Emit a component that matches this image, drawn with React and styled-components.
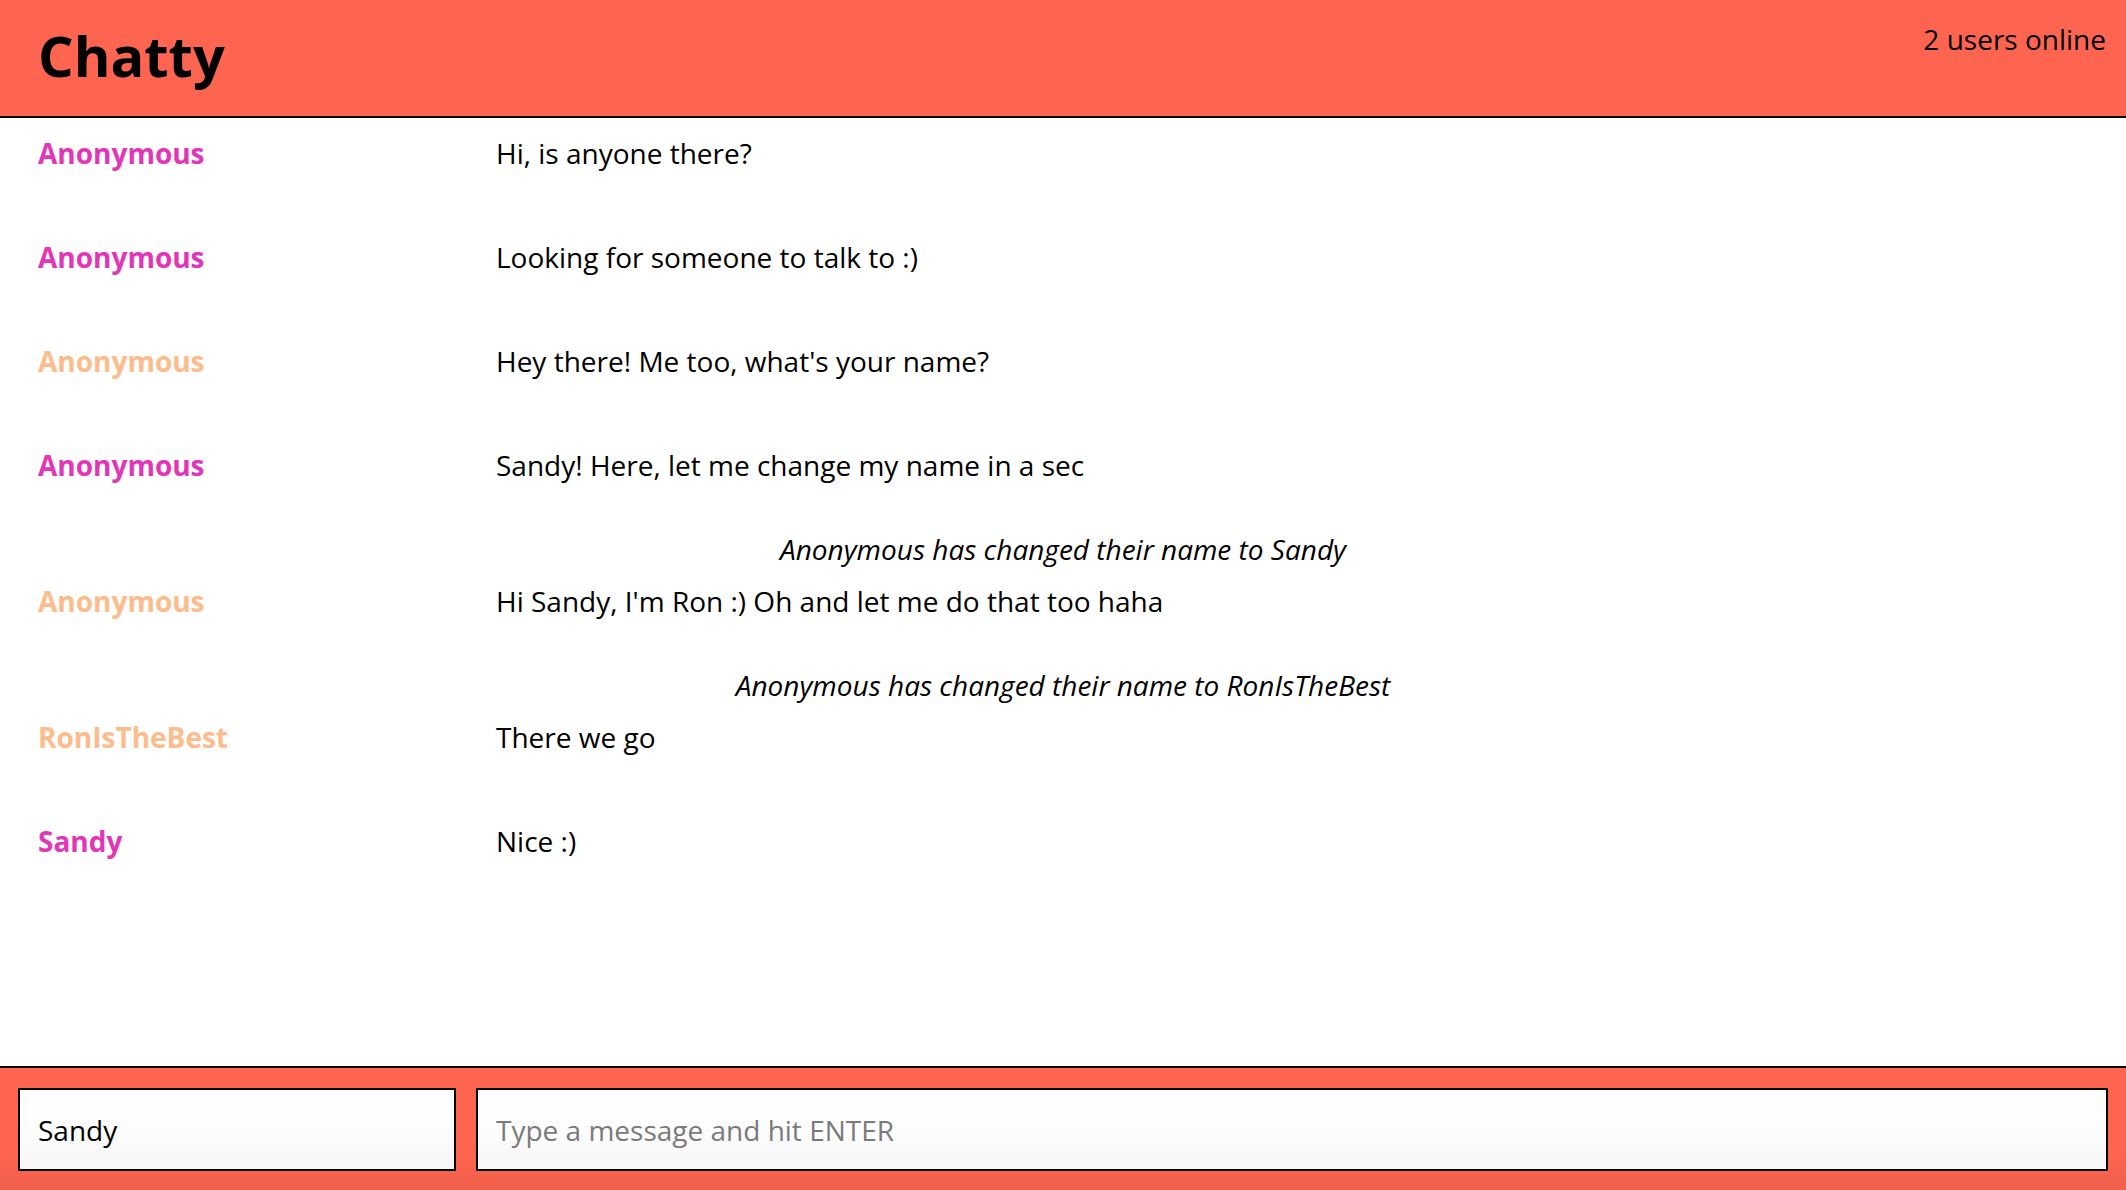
import React from 'react';
import styled, { createGlobalStyle } from 'styled-components';

const GlobalStyle = createGlobalStyle`
  * { box-sizing: border-box; }
  html, body, #root { height: 100%; }
  body {
    margin: 0;
    font-family: "Open Sans", "Liberation Sans", sans-serif;
    color: #000;
    background: #fff;
  }
`;

const Page = styled.div`
  display: flex;
  flex-direction: column;
  height: 100vh;
`;

const NavBar = styled.nav`
  display: flex;
  justify-content: space-between;
  align-items: flex-start;
  height: 118px;
  padding: 0 20px 0 38px;
  background: #fe6550;
  border-bottom: 2px solid #000;
`;

const Brand = styled.h1`
  margin: 0;
  font-size: 56px;
  font-weight: 700;
  line-height: 110px;
`;

const OnlineCount = styled.div`
  padding-top: 20px;
  font-size: 28px;
  line-height: 38px;
`;

const MessageList = styled.main`
  flex: 1;
  overflow: hidden;
`;

const MessageRow = styled.div`
  display: flex;
  padding: 19px 0 52px 38px;
  font-size: 28px;
  line-height: 33px;
`;

const Username = styled.span`
  flex: 0 0 458px;
  font-weight: 700;
  color: ${(p) => p.color};
`;

const Content = styled.span`
  flex: 1;
`;

const SystemNote = styled.div`
  text-align: center;
  font-size: 28px;
  line-height: 33px;
  margin-top: -1px;
  font-style: italic;
`;

const ChatBar = styled.footer`
  display: flex;
  gap: 20px;
  padding: 20px 18px 19px;
  background: linear-gradient(to bottom, #fe6550 0%, #fd6550 70%, #ef5f4a 100%);
  border-top: 2px solid #000;
`;

const ChatInput = styled.input`
  height: 83px;
  width: ${(p) => (p.$grow ? 'auto' : '438px')};
  flex: ${(p) => (p.$grow ? '1' : '0 0 438px')};
  padding: 0 18px;
  border: 2px solid #000;
  border-radius: 0;
  outline: none;
  background: linear-gradient(to bottom, #ffffff 0%, #fdfdfd 50%, #f6f6f6 100%);
  font-family: "Open Sans", "Liberation Sans", sans-serif;
  font-size: 28px;
  color: #000;

  &::placeholder {
    color: #7a7a7a;
  }
`;

const PINK = '#e236b9';
const PEACH = '#fdbc8c';

const messages = [
  { type: 'msg', user: 'Anonymous', color: PINK, text: 'Hi, is anyone there?' },
  { type: 'msg', user: 'Anonymous', color: PINK, text: 'Looking for someone to talk to :)' },
  { type: 'msg', user: 'Anonymous', color: PEACH, text: "Hey there! Me too, what's your name?" },
  { type: 'msg', user: 'Anonymous', color: PINK, text: 'Sandy! Here, let me change my name in a sec' },
  { type: 'sys', text: 'Anonymous has changed their name to Sandy' },
  { type: 'msg', user: 'Anonymous', color: PEACH, text: "Hi Sandy, I'm Ron :) Oh and let me do that too haha" },
  { type: 'sys', text: 'Anonymous has changed their name to RonIsTheBest' },
  { type: 'msg', user: 'RonIsTheBest', color: PEACH, text: 'There we go' },
  { type: 'msg', user: 'Sandy', color: PINK, text: 'Nice :)' },
];

export default function App() {
  return (
    <>
      <GlobalStyle />
      <Page>
        <NavBar>
          <Brand>Chatty</Brand>
          <OnlineCount>2 users online</OnlineCount>
        </NavBar>
        <MessageList>
          {messages.map((m, i) => (m.type === 'sys' ? (
            <SystemNote key={i}>{m.text}</SystemNote>
          ) : (
            <MessageRow key={i}>
              <Username color={m.color}>{m.user}</Username>
              <Content>{m.text}</Content>
            </MessageRow>
          )))}
        </MessageList>
        <ChatBar>
          <ChatInput defaultValue="Sandy" />
          <ChatInput $grow placeholder="Type a message and hit ENTER" />
        </ChatBar>
      </Page>
    </>
  );
}
